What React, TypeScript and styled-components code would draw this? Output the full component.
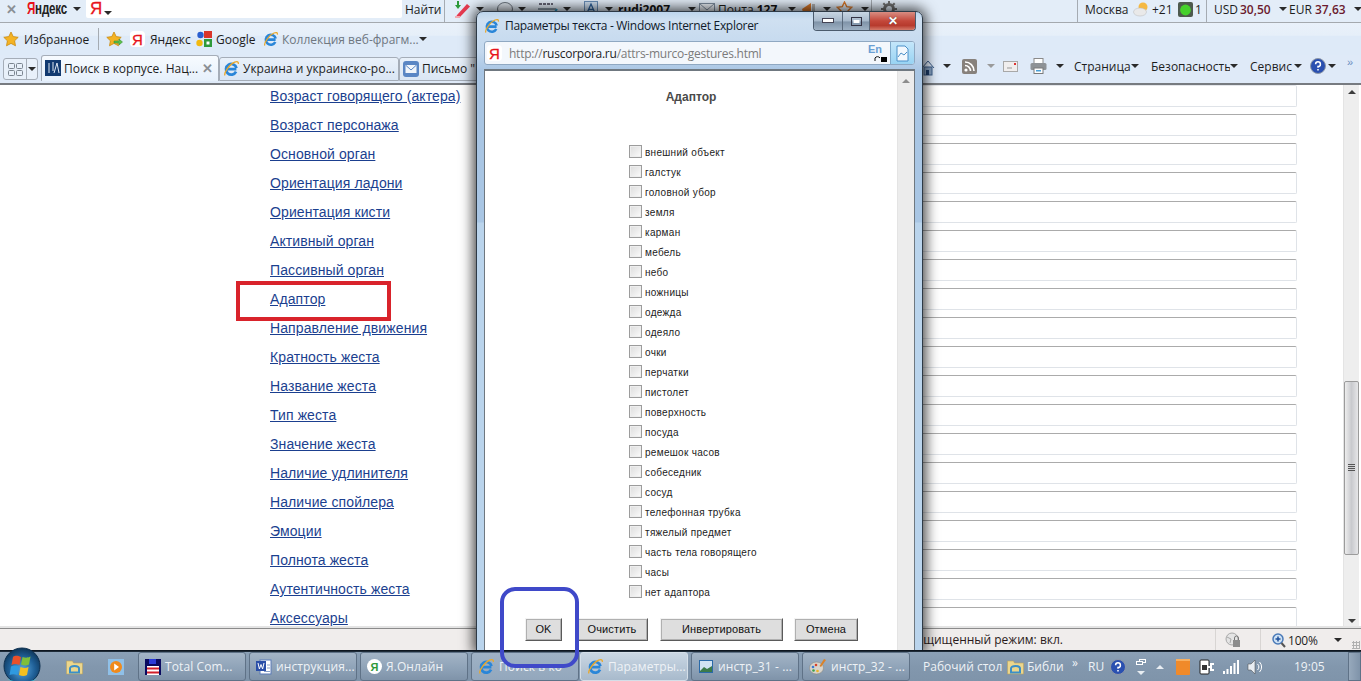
import React from 'react';
import styled, { createGlobalStyle } from 'styled-components';

const Global = createGlobalStyle`
  html, body { margin: 0; padding: 0; width: 1361px; height: 681px; overflow: hidden; background: #fff; }
  #root { width: 1361px; height: 681px; }
  * { box-sizing: border-box; }
`;
const UI = `"Open Sans", "Liberation Sans", sans-serif`;
const AR = `"Liberation Sans", Arial, sans-serif`;

const Screen = styled.div`position: relative; width: 1361px; height: 681px; display: flex; flex-direction: column; overflow: hidden; font-family: ${UI}; font-size: 12px; color: #1d1d1d;`;
const TopBar = styled.div`flex: 0 0 23px; display: flex; align-items: flex-start; background: #e3edf8; border-bottom: 1px solid #a4a9ae; height: 23px;`;
const FavBar = styled.div`flex: 0 0 32px; display: flex; align-items: center; background: linear-gradient(#e9f1fa 0, #e6eff9 38%, #deeaf8 42%, #deeaf8 100%);`;
const TabBar = styled.div`flex: 0 0 30px; display: flex; align-items: flex-start; background: #dfeaf8; border-bottom: 2px solid #777b80; height: 30px;`;
const Cell = styled.div<{ $w: number; $pl?: number; $h?: number; $center?: boolean }>`
  flex: 0 0 ${p => p.$w}px; width: ${p => p.$w}px; height: ${p => p.$h ?? 18}px; padding-left: ${p => p.$pl ?? 0}px;
  display: flex; align-items: center; white-space: nowrap; overflow: hidden;
  justify-content: ${p => (p.$center ? 'center' : 'flex-start')};
`;
const Sep = styled(Cell)`border-left: 1px solid #a5abb2; height: 22px;`;
const Caret = styled.span<{ $c?: string }>`
  display: inline-block; width: 0; height: 0; border-left: 4px solid transparent; border-right: 4px solid transparent; border-top: 4px solid ${p => p.$c ?? '#2a2a2a'};
`;
const Close = styled.span`font: bold 13px ${AR}; color: #8a8f94;`;
const Logo = styled.span`font: bold 17px/18px ${AR}; display: inline-block; transform: scaleX(.68); transform-origin: left center; letter-spacing: -.3px; color: #222;`;
const Red = styled.span`color: #e8121a;`;
const Search = styled.div`flex: 0 0 316px; height: 18px; background: #fff; display: flex; align-items: center; padding-left: 4px; gap: 2px; border-radius: 0 0 2px 2px;`;
const YaBig = styled.span`font: 17px/18px ${AR}; -webkit-text-stroke: .3px #e8121a; color: #e8121a;`;
const SearchCaret = styled(Caret)`margin-top: 8px;`;
const Bold = styled.b`color: #6b1a2e; font-weight: 600;`;
const Strong = styled.b`font-weight: 700; color: #111;`;
const Gray = styled.span`color: #6f7780;`;

const YaBadge = styled.span`display: inline-flex; width: 15px; height: 16px; background: #fff; border-radius: 4px; justify-content: center; align-items: center; font: 15px ${AR}; -webkit-text-stroke: .3px #e8121a; color: #e8121a;`;

const Tab = styled.div<{ $w: number; $active?: boolean }>`
  flex: 0 0 ${p => p.$w}px; width: ${p => p.$w}px; height: ${p => (p.$active ? 26 : 24)}px; margin-top: ${p => (p.$active ? 0 : 2)}px;
  border: 1px solid #a5adb8; border-bottom: ${p => (p.$active ? '0' : '1px solid #a5adb8')}; border-radius: 3px 3px 0 0;
  background: ${p => (p.$active ? 'linear-gradient(#f7fbff,#e6f0fb)' : 'linear-gradient(#e9f1fa,#dae6f4)')};
  display: flex; align-items: center; gap: 3px; padding-left: 3px; padding-bottom: 1px; white-space: nowrap; position: relative; z-index: ${p => (p.$active ? 1 : 0)};
`;
const TabText = styled.span`flex: none;`;
const TabX = styled.span`font: bold 13px ${AR}; color: #8a8f94; margin-left: auto; margin-right: 5px;`;
const GroupBtn = styled.div`flex: 0 0 35px; height: 22px; margin: 3px 3px 0 3px; border: 1px solid #a5adb8; border-radius: 3px; display: flex; align-items: center; background: #e8f0fa;`;
const GroupIcon = styled.div`flex: 0 0 23px; height: 100%; border-right: 1px solid #a5adb8; display: flex; align-items: center; justify-content: center;`;
const GroupCaret = styled.div`flex: 1; display: flex; justify-content: center;`;
const ChevronMore = styled.span`color: #6a8cc0; font: 11px ${AR}; margin-top: -8px;`;

const Page = styled.div`flex: 1; display: flex; background: #fff; overflow: hidden; min-height: 0;`;
const Links = styled.div`flex: 0 0 auto; width: 620px; padding-left: 270px; margin-top: -3px; display: flex; flex-direction: column;`;
const PageLink = styled.a`flex: 0 0 29px; font: 14px/29px ${AR}; letter-spacing: .1px; color: #1b3f8f; text-decoration: underline; white-space: nowrap;`;
const Fields = styled.div`flex: 0 0 auto; width: 397px; margin-left: 280px; display: flex; flex-direction: column; gap: 7px;`;
const Field = styled.div`flex: 0 0 22px; border: 1px solid #dfe3e8; border-top-color: #ababab; border-left-color: #d0d0d0; border-radius: 2px; background: #fff; &:first-child { border-top-color: #e4e6ea; }`;
const Scroll = styled.div`flex: 0 0 16px; margin-left: 46px; background: #eeeeee; border-left: 1px solid #e4e4e4; display: flex; flex-direction: column; align-items: center;`;
const ArrowBox = styled.div`flex: 0 0 14px; display: flex; align-items: center; justify-content: center;`;
const ArrowUp = styled.span<{ $c?: string }>`width: 0; height: 0; border-left: 4px solid transparent; border-right: 4px solid transparent; border-bottom: 4px solid ${p => p.$c ?? '#3c3c3c'};`;
const ArrowDown = styled(ArrowUp)`border-bottom: 0; border-top: 4px solid #3c3c3c;`;
const Thumb = styled.div`flex: 0 0 174px; width: 15px; margin-top: 282px; margin-bottom: auto; border: 1px solid #9b9b9b; border-radius: 2px; background: linear-gradient(90deg,#ededed,#c9cace 50%,#e6e6e8); display: flex; align-items: center; justify-content: center;`;
const Grip = styled.div`width: 7px; height: 8px; background: repeating-linear-gradient(#555 0 1px, transparent 1px 2px);`;

const StatusBar = styled.div`flex: 0 0 23px; display: flex; align-items: center; background: #f0edec; border-top: 1px solid #8b8b8b; box-shadow: 0 -2px 0 #e4e4e4; position: relative;`;
const StatusText = styled.div`flex: 0 0 1063px; text-align: right; white-space: nowrap; font-size: 12px; color: #2a1a1a; margin-top: -1px;`;
const StatusSep = styled(Cell)`border-left: 1px solid #d8d5d3; height: 22px;`;
const ZoomValue = styled.span`flex: 0 0 48px; padding-left: 2px; letter-spacing: -.2px;`;
const ResizeGrip = styled.div`width: 8px; height: 8px; margin-top: 10px; background: radial-gradient(circle, #b0b0b0 1px, transparent 1.2px) 0 0/3px 3px;`;

const Taskbar = styled.div`flex: 0 0 30px; position: relative; z-index: 2; display: flex; align-items: center; background: linear-gradient(#8ba0b6,#8297ad 50%,#7f94aa); border-top: 1px solid #1e2b38; color: #eef2f6; font-size: 12px; box-shadow: 0 -1px 0 #0e1620;`;
const TaskBtn = styled.div<{ $w: number; $gap?: number; $active?: boolean; $pressed?: boolean }>`
  flex: 0 0 ${p => p.$w}px; width: ${p => p.$w}px; height: 29px; margin-right: ${p => p.$gap ?? 3}px;
  border: 1px solid ${p => (p.$active ? '#d4dee8' : '#5f7287')}; border-radius: 3px;
  background: ${p => (p.$active ? 'linear-gradient(#c9d6e3,#a8bacc)' : p.$pressed ? 'linear-gradient(#9fb2c6,#93a7bc)' : 'linear-gradient(#a3b4c6,#8fa3b8 55%,#7f93a9)')};
  display: flex; align-items: center; gap: 4px; padding-left: 6px; white-space: nowrap; overflow: hidden; letter-spacing: .1px;
`;
const ShowDesktop = styled.div`flex: 0 0 13px; height: 29px; margin-left: auto; border: 1px solid #5f7287; background: linear-gradient(90deg,#97a9bc,#7f93a9);`;
const TrayText = styled.span`color: #eef2f6;`;
const TrayStack = styled.div`display: flex; flex-direction: column; align-items: center; gap: 6px; width: 10px; margin-left: 1px;`;
const Chevrons = styled.span`margin-top: -8px; font-size: 12px;`;
const Time = styled.span`color: #eef2f6; font-size: 12px;`;
const Orb = styled.div`position: absolute; left: 3px; top: -5px; z-index: 3;`;

const Popup = styled.div`
  position: absolute; left: 476px; top: 11px; width: 447px; height: 640px; z-index: 1;
  border: 1px solid #2e3a46; border-radius: 7px 7px 0 0; box-shadow: 0 0 13px 3px rgba(0,0,0,.72);
  background: linear-gradient(#bdd5ec 0, #cfe0f1 8px, #c3d8ee 40px, #a9c6e4 59px, #a9c6e4 210px, #bad4ec 211px, #bad4ec 100%);
  display: flex; flex-direction: column; padding: 0 7px;
`;
const TitleRow = styled.div`flex: 0 0 29px; display: flex; align-items: flex-start; position: relative;`;
const TitleLeft = styled.div`display: flex; align-items: center; gap: 5px; padding: 5px 0 0 0; font-size: 12px; letter-spacing: -.3px; color: #101a2a; white-space: nowrap;`;
const WinCtrls = styled.div`position: absolute; right: -1px; top: 0; width: 103px; height: 19px; display: flex; border: 1px solid #4b5b6d; border-top: 0; border-radius: 0 0 4px 4px; overflow: hidden;`;
const WinBtn = styled.div<{ $w: number; $close?: boolean }>`
  flex: 0 0 ${p => p.$w}px; display: flex; align-items: center; justify-content: center; border-right: 1px solid #5a6a7c;
  background: ${p => (p.$close ? 'linear-gradient(#d98d82,#c3473a 50%,#b73b2e 75%,#d47a6a)' : 'linear-gradient(#c8d6e4,#a7b9cb 50%,#7f93a8 55%,#9eb1c4)')};
  &:last-child { border-right: 0; }
`;
const CloseX = styled.span`font: bold 12px ${AR}; color: #fff; text-shadow: 0 0 1px #333;`;
const AddrRow = styled.div`flex: 0 0 24px; display: flex; border: 1px solid #8fa8c2; border-radius: 3px; background: #f3f7fc; align-items: center; overflow: hidden;`;
const Url = styled.div`flex: 1; padding-left: 6px; color: #7b7b7b; font-size: 12px; letter-spacing: -.25px; white-space: nowrap;`;
const UrlHost = styled.span`color: #1e1e1e;`;
const AddrBtn = styled.div`flex: 0 0 24px; height: 100%; background: linear-gradient(#c4e6fa,#98d3f3); border-left: 1px solid #7fa9c9; display: flex; align-items: center; justify-content: center;`;
const EnIcon = styled.div`position: relative; width: 19px; height: 18px; margin-right: 3px; font: bold 11px/11px ${AR}; color: #6a9fd4;`;
const EnCursor = styled.svg`position: absolute; right: 0; bottom: 0;`;
const Body = styled.div`flex: 1; margin-top: 4px; border: 1px solid #6f7880; border-top-width: 2px; border-bottom: 0; background: #fff; display: flex; min-height: 0;`;
const Content = styled.div`flex: 1; padding-top: 19px; display: flex; flex-direction: column;`;
const Heading = styled.div`text-align: center; font: bold 12px/14px ${AR}; color: #4a4a4a;`;
const List = styled.div`margin: 39px 0 0 144px; display: flex; flex-direction: column;`;
const Row = styled.label`flex: 0 0 20px; display: flex; align-items: center; gap: 3px; font: 10px/20px ${AR}; letter-spacing: .3px; color: #222;`;
const Check = styled.input`appearance: none; margin: 0 0 3px 0; width: 13px; height: 13px; border: 1px solid #9c9c9c; background: linear-gradient(135deg,#dcdcdc,#fbfbfb); box-shadow: inset 0 0 0 1px #eee;`;
const Buttons = styled.div`margin-top: 15px; padding-left: 40px; display: flex;`;
const Btn = styled.div<{ $w: number; $ml?: number }>`
  flex: 0 0 ${p => p.$w}px; height: 23px; margin-left: ${p => p.$ml ?? 0}px; background: #dedede; font: 11px/20px ${AR}; letter-spacing: .12px; color: #111; text-align: center;
  border: 1px solid; border-color: #f3f3f3 #5a5a5a #5a5a5a #f3f3f3; box-shadow: 0 0 0 1px #b0b0b0 inset;
`;
const InnerScroll = styled.div`flex: 0 0 17px; background: #ececec; border-left: 1px solid #e4e4e4; display: flex; justify-content: center; padding-top: 8px;`;

const RedBox = styled.div`position: absolute; left: 236px; top: 281px; width: 155px; height: 40px; border: 4px solid #d9232b; z-index: 1;`;
const BlueBox = styled.div`position: absolute; left: 500px; top: 587px; width: 79px; height: 81px; border: 4px solid #3f49c9; border-radius: 15px; z-index: 4;`;

/* ---------- icons ---------- */
const Ie = ({ s = 16 }: { s?: number }) => (
  <svg width={s} height={s} viewBox="0 0 16 16" style={{ flex: 'none' }}>
    <path d="M3.600 8.600h9M12.300 11a5 5 0 1 1 .4-3.400" fill="none" stroke="#2a86d8" strokeWidth="2.600" />
    <path d="M2 14.500C.3 12.600 6 4 11 2c2.500-1 3.600-.4 3.400 1.600" fill="none" stroke="#e8a82c" strokeWidth="1.300" />
  </svg>
);
const Star = ({ c = '#f4b324', arrow }: { c?: string; arrow?: boolean }) => (
  <svg width="17" height="16" viewBox="0 0 17 16" style={{ flex: 'none' }}>
    <path d="M8 1l2.200 4.600 5 .7-3.600 3.500.9 5L8 12.400 3.500 14.800l.9-5L.8 6.300l5-.7z" fill={c} stroke="#c98a12" strokeWidth=".8" />
    {arrow && <path d="M8 10h5V8l3.500 3-3.500 3v-2H8z" fill="#5cc04a" stroke="#2c8a2a" strokeWidth=".5" />}
  </svg>
);
const GoogleIco = () => (
  <svg width="16" height="16" viewBox="0 0 16 16" style={{ flex: 'none' }}>
    <rect x="8" y="0" width="8" height="7" fill="#d9352a" />
    <circle cx="4.500" cy="4" r="3.200" fill="#2a5fd0" />
    <circle cx="3.500" cy="12" r="3.200" fill="#f2b90f" />
    <rect x="8" y="8" width="8" height="8" fill="#2f9a3a" />
    <rect x="10.500" y="10.500" width="3" height="3" fill="#fff" />
  </svg>
);
const Pencil = () => (
  <svg width="18" height="17" viewBox="0 0 18 17"><path d="M4 14L14 3l3 2.500L7 16H3z" fill="#e63a50" /><path d="M2 16h5" stroke="#f2a8b0" strokeWidth="2" /><path d="M4 0h2v4h2L5 8 2 4h2z" fill="#2c9a3a" /></svg>
);
const Ring = () => <svg width="18" height="16" viewBox="0 0 18 16"><ellipse cx="9" cy="8" rx="7.500" ry="6.500" fill="#dfe6ee" stroke="#6d7680" /></svg>;
const Envelope = () => <svg width="16" height="13" viewBox="0 0 16 13"><rect x=".5" y=".5" width="15" height="12" fill="#eef3f9" stroke="#7f8ea0" /><path d="M.5.5L8 7l7.500-6.500" fill="none" stroke="#7f8ea0" /></svg>;
const Weather = () => (
  <svg width="17" height="16" viewBox="0 0 17 16"><circle cx="10" cy="6" r="4.500" fill="#f5b942" /><ellipse cx="7" cy="11" rx="6.500" ry="4" fill="#e9e9e9" stroke="#b8b8b8" strokeWidth=".5" /></svg>
);
const GreenLight = () => <svg width="15" height="15" viewBox="0 0 15 15"><rect width="15" height="15" rx="2" fill="#4e5a4e" /><circle cx="7.500" cy="8" r="5.400" fill="#45d12c" /></svg>;
const Rss = () => <svg width="15" height="15" viewBox="0 0 15 15"><rect width="15" height="15" rx="2" fill="#87817c" /><circle cx="4" cy="11" r="1.600" fill="#fff" /><path d="M3 6.500a5.500 5.500 0 0 1 5.500 5.500M3 3a9 9 0 0 1 9 9" fill="none" stroke="#fff" strokeWidth="1.600" /></svg>;
const MailIco = () => <svg width="15" height="11" viewBox="0 0 15 11"><rect x=".5" y=".5" width="14" height="10" fill="#f0eeee" stroke="#a8a8a8" /><path d="M4 7h5" stroke="#999" /><rect x="11" y="2" width="2" height="2" fill="#d33" /></svg>;
const Printer = () => <svg width="17" height="16" viewBox="0 0 17 16"><rect x="4" y="0.500" width="9" height="5" fill="#fff" stroke="#8a8a8a" /><rect x=".5" y="5" width="16" height="7" rx="1.500" fill="#8e9296" /><rect x="4" y="10" width="9" height="5.500" fill="#fff" stroke="#7a7a7a" /><rect x="6" y="12" width="5" height="1.500" fill="#4aa0d8" /></svg>;
const Help = () => <svg width="16" height="16" viewBox="0 0 16 16"><circle cx="8" cy="8" r="7.500" fill="#2a50b0" stroke="#8e98a8" /><path d="M5.600 6.200A2.400 2.400 0 1 1 8 8.600v1.200M8 11v1.400" fill="none" stroke="#fff" strokeWidth="1.500" /></svg>;
const House = () => <svg width="14" height="16" viewBox="0 0 14 16"><path d="M1 8l6-7 6 7" fill="none" stroke="#3d5f8c" /><rect x="3" y="7" width="8" height="8" fill="#8aa5c4" stroke="#3d5f8c" /><rect x="5" y="10" width="3" height="5" fill="#1e3f6c" /></svg>;
const Corpus = () => <svg width="16" height="16" viewBox="0 0 16 16" style={{ flex: 'none' }}><rect width="16" height="16" fill="#123a70" /><path d="M4 3v10M8 2v9M12 3L9 13M12 3l2 10" stroke="#dfe8f3" strokeWidth="1" fill="none" /></svg>;
const MailTab = () => <svg width="16" height="16" viewBox="0 0 16 16" style={{ flex: 'none' }}><rect width="16" height="16" rx="3" fill="#5a86c4" /><rect x="2.500" y="4" width="11" height="8" fill="#f1f5fa" /><path d="M2.500 4L8 9l5.500-5" fill="none" stroke="#5a86c4" /></svg>;
const Group = () => <svg width="15" height="13" viewBox="0 0 15 13"><rect x=".5" y=".5" width="6" height="5" rx="1" fill="none" stroke="#7b8590" /><rect x="8.500" y=".5" width="6" height="5" rx="1" fill="none" stroke="#7b8590" /><rect x=".5" y="7.500" width="6" height="5" rx="1" fill="none" stroke="#7b8590" /><rect x="8.500" y="7.500" width="6" height="5" rx="1" fill="none" stroke="#7b8590" /></svg>;
const Folder = () => <svg width="17" height="16" viewBox="0 0 17 16" style={{ flex: 'none' }}><path d="M0.500 2h6l1 2h9v11H.5z" fill="#ecd68c" stroke="#b8a360" strokeWidth=".6" /><path d="M4 14V9.500a4.500 2.500 0 0 1 9 0V14" fill="none" stroke="#3b8fc8" strokeWidth="2" /><rect x="3" y="12.500" width="11" height="2" fill="#3b8fc8" /></svg>;
const Player = () => <svg width="16" height="16" viewBox="0 0 16 16"><rect width="16" height="16" fill="#8fc0e8" /><circle cx="8" cy="8" r="6" fill="#f08a1c" /><path d="M6.200 4.600L11 8l-4.800 3.400z" fill="#fff" /></svg>;
const Floppy = () => <svg width="16" height="16" viewBox="0 0 16 16" style={{ flex: 'none' }}><rect width="16" height="16" fill="#0a0a60" /><rect x="4" y="0" width="7" height="5" fill="#2a3ad8" /><rect x="2" y="7" width="12" height="9" fill="#fff" /><rect x="2" y="8.500" width="12" height="2" fill="#d21f2a" /><rect x="2" y="12.500" width="12" height="2" fill="#d21f2a" /></svg>;
const Word = () => <svg width="16" height="16" viewBox="0 0 16 16" style={{ flex: 'none' }}><rect x="4" y="1" width="11" height="14" fill="#fff" stroke="#5a7bb8" /><rect x="0" y="2" width="10" height="10" fill="#2a4fa8" /><path d="M2 4l1.400 6L5 5.500 6.600 10 8 4" fill="none" stroke="#fff" strokeWidth="1" /><path d="M11 6h3M11 9h3M8 12.500h6" stroke="#8aa0c8" /></svg>;
const YaOnline = styled.span`flex: none; width: 15px; height: 15px; border-radius: 50%; background: #fff; display: flex; align-items: center; justify-content: center; font: bold 11px ${AR}; color: #2f9a3a;`;
const Pic = () => <svg width="16" height="15" viewBox="0 0 16 15" style={{ flex: 'none' }}><rect x="1.500" y="1.500" width="13" height="12" fill="#cfe2f2" stroke="#2a6aa8" /><path d="M2 12l4-4 3 2 5-3v6H2z" fill="#3b7a4a" /></svg>;
const Palette = () => <svg width="18" height="16" viewBox="0 0 18 16" style={{ flex: 'none' }}><ellipse cx="7.500" cy="9" rx="7" ry="6" fill="#d8d4cc" stroke="#8a8578" strokeWidth=".5" /><circle cx="4" cy="8" r="1.300" fill="#3b7ad0" /><circle cx="7" cy="6" r="1.300" fill="#d8432a" /><circle cx="4.500" cy="11.500" r="1.300" fill="#3ba04a" /><circle cx="8.500" cy="12" r="1.300" fill="#eab22a" /><path d="M15 0l2 1-5 7-1.500-1z" fill="#d9822a" /></svg>;
const WinOrb = () => (
  <svg width="38" height="38" viewBox="0 0 38 38">
    <defs>
      <radialGradient id="orbg" cx="50%" cy="60%" r="60%"><stop offset="0" stopColor="#5aa8e0" /><stop offset=".6" stopColor="#1f5f96" /><stop offset="1" stopColor="#0e3558" /></radialGradient>
    </defs>
    <circle cx="19" cy="19" r="18" fill="url(#orbg)" stroke="#0e3050" />
    <path d="M4 31a18 12 0 0 0 30 0 18 9 0 0 1-30 0z" fill="#3fd4f0" opacity=".9" />
    <path d="M10 10c3-2 5-1 8 0l-1.500 8c-3-1-5-1.500-8 0z" fill="#e8502a" />
    <path d="M19.500 10c3 1 5 1 8-.5l-1.500 8c-3 1.500-5 1-8 0z" fill="#7fbf3a" />
    <path d="M8 19.500c3-1.500 5-1 8 0L14.500 28c-3-1-5-1-8 0z" fill="#2f9ae0" />
    <path d="M17.500 20c3 1 5 1.500 8 0L24 28c-3 1.500-5 1-8 0z" fill="#f4c020" />
  </svg>
);
const OrangeBook = () => <svg width="14" height="16" viewBox="0 0 14 16"><rect width="14" height="16" rx="1" fill="#f08a2a" /><rect x="0" y="0" width="14" height="2" fill="#f8b060" /></svg>;
const Plug = () => <svg width="16" height="16" viewBox="0 0 16 16"><rect x="1" y="1" width="9" height="14" rx="1" fill="#fff" stroke="#222" /><path d="M9 8h3V5h3M12 8v3h3" stroke="#fff" strokeWidth="2" fill="none" /><rect x="3" y="6" width="5" height="5" fill="#333" /></svg>;
const Signal = () => <svg width="16" height="14" viewBox="0 0 16 14"><rect x="0" y="11" width="2" height="3" fill="#fff" /><rect x="3.500" y="9" width="2" height="5" fill="#fff" /><rect x="7" y="6" width="2" height="8" fill="#fff" /><rect x="10.500" y="3" width="2" height="11" fill="#fff" /><rect x="14" y="0" width="2" height="14" fill="#fff" /></svg>;
const Speaker = () => <svg width="17" height="16" viewBox="0 0 17 16"><path d="M1 5h3l4-4v14l-4-4H1z" fill="#e8edf2" stroke="#444" strokeWidth=".5" /><path d="M10.500 5a4 4 0 0 1 0 6M12.500 3a7 7 0 0 1 0 10" fill="none" stroke="#fff" /></svg>;
const TrayWin = () => <svg width="10" height="6" viewBox="0 0 10 6"><rect x="3.500" y=".5" width="6" height="3" fill="none" stroke="#fff" /><rect x=".5" y="2.500" width="6" height="3" fill="#8297ad" stroke="#fff" /></svg>;
const GlobeLock = () => <svg width="16" height="16" viewBox="0 0 16 16"><circle cx="7" cy="7" r="6" fill="#e4e4e4" stroke="#a8a8a8" /><path d="M2 5l4 2-1 4" fill="none" stroke="#a8a8a8" /><rect x="8" y="8" width="7" height="7" fill="#8c8c8c" /><path d="M9.500 8V6a2 2 0 0 1 4 0v2" fill="none" stroke="#777" /></svg>;
const ZoomIco = () => <svg width="14" height="15" viewBox="0 0 14 15"><circle cx="6" cy="6" r="5" fill="#cfe2f4" stroke="#4a7ab8" strokeWidth="1.500" /><path d="M6 3.500v5M3.500 6h5" stroke="#1e4f9a" strokeWidth="1.500" /><path d="M9.500 10l3.500 4" stroke="#555" strokeWidth="2" /></svg>;
const Orange = () => <svg width="16" height="16" viewBox="0 0 16 16"><path d="M1 8l9-6v13H3z" fill="#d9782a" /><rect x="11" y="3" width="3" height="12" fill="#b0b0b0" /></svg>;
const StarOut = () => <svg width="18" height="16" viewBox="0 0 17 16"><path d="M8 1l2.200 4.600 5 .7-3.600 3.500.9 5L8 12.400 3.500 14.800l.9-5L.8 6.300l5-.7z" fill="none" stroke="#d9782a" strokeWidth="1.400" /></svg>;
const Gear = () => <svg width="16" height="16" viewBox="0 0 16 16"><circle cx="8" cy="8" r="4.500" fill="none" stroke="#707070" strokeWidth="3" /><path d="M8 0v3M8 13v3M0 8h3M13 8h3M2.300 2.300l2 2M11.700 11.700l2 2M2.300 13.700l2-2M11.700 4.300l2-2" stroke="#707070" strokeWidth="2" /></svg>;
const Abv = () => <svg width="24" height="16" viewBox="0 0 24 16"><rect x="1" y="7" width="18" height="2" fill="#8a9aa8" /><path d="M16 14l4-6" stroke="#2a9ac8" strokeWidth="2" /><path d="M2 3h14" stroke="#667" strokeWidth="2" strokeDasharray="3 1" /></svg>;
const BlueA = () => <svg width="14" height="16" viewBox="0 0 14 16"><rect x=".5" y=".5" width="13" height="15" fill="#cfe0f2" stroke="#6a8fb8" /><path d="M3.500 11L7 3l3.500 8M5 8.500h4" stroke="#2a5f9a" strokeWidth="1.300" fill="none" /></svg>;
const PageIco = () => <svg width="17" height="17" viewBox="0 0 17 17"><path d="M3 1h8l3 3v12H3z" fill="#f2f8fd" stroke="#4a90c8" /><path d="M4 12l3-4 3 2 3-3" fill="none" stroke="#4a90c8" /></svg>;

const links = ['Возраст говорящего (актера)', 'Возраст персонажа', 'Основной орган', 'Ориентация ладони', 'Ориентация кисти', 'Активный орган', 'Пассивный орган', 'Адаптор', 'Направление движения', 'Кратность жеста', 'Название жеста', 'Тип жеста', 'Значение жеста', 'Наличие удлинителя', 'Наличие спойлера', 'Эмоции', 'Полнота жеста', 'Аутентичность жеста', 'Аксессуары'];
const adaptors = ['внешний объект', 'галстук', 'головной убор', 'земля', 'карман', 'мебель', 'небо', 'ножницы', 'одежда', 'одеяло', 'очки', 'перчатки', 'пистолет', 'поверхность', 'посуда', 'ремешок часов', 'собеседник', 'сосуд', 'телефонная трубка', 'тяжелый предмет', 'часть тела говорящего', 'часы', 'нет адаптора'];

export default function App() {
  return (
    <Screen>
      <Global />
      <TopBar>
        <Cell $w={27} $pl={6}><Close>✕</Close></Cell>
        <Cell $w={46}><Logo><Red>Я</Red>ндекс</Logo></Cell>
        <Cell $w={13}><Caret /></Cell>
        <Search><YaBig>Я</YaBig><SearchCaret /></Search>
        <Cell $w={42} $pl={3}>Найти</Cell>
        <Sep $w={9} />
        <Cell $w={19}><Pencil /></Cell>
        <Cell $w={18} $pl={4}><Caret /></Cell>
        <Cell $w={28} $pl={6}><Ring /></Cell>
        <Cell $w={15}><Caret /></Cell>
        <Cell $w={30} $pl={4}><Abv /></Cell>
        <Cell $w={15}><Caret /></Cell>
        <Cell $w={27} $pl={6}><BlueA /></Cell>
        <Cell $w={13}><Caret /></Cell>
        <Cell $w={70}><Strong>rudi2007</Strong></Cell>
        <Cell $w={11}><Caret /></Cell>
        <Cell $w={19}><Envelope /></Cell>
        <Cell $w={70}>Почта&nbsp;<Strong>127</Strong></Cell>
        <Cell $w={13}><Caret /></Cell>
        <Cell $w={22}><Orange /></Cell>
        <Cell $w={13}><Caret /></Cell>
        <Cell $w={25}><StarOut /></Cell>
        <Cell $w={10}><Caret /></Cell>
        <Sep $w={10} />
        <Cell $w={196}><Gear /></Cell>
        <Sep $w={8} />
        <Cell $w={48}>Москва</Cell>
        <Cell $w={19}><Weather /></Cell>
        <Cell $w={26}>+21</Cell>
        <Cell $w={17}><GreenLight /></Cell>
        <Cell $w={11}>1</Cell>
        <Sep $w={8} />
        <Cell $w={26}>USD</Cell>
        <Cell $w={39}><Bold>30,50</Bold></Cell>
        <Cell $w={10}><Caret /></Cell>
        <Cell $w={26}>EUR</Cell>
        <Cell $w={39}><Bold>37,63</Bold></Cell>
        <Cell $w={8}><Caret /></Cell>
      </TopBar>

      <FavBar>
        <Cell $w={24} $pl={3}><Star /></Cell>
        <Cell $w={74}>Избранное</Cell>
        <Sep $w={8} />
        <Cell $w={24}><Star arrow /></Cell>
        <Cell $w={20}><YaBadge>Я</YaBadge></Cell>
        <Cell $w={46}>Яндекс</Cell>
        <Cell $w={20}><GoogleIco /></Cell>
        <Cell $w={47}>Google</Cell>
        <Cell $w={19}><Ie /></Cell>
        <Cell $w={137}><Gray>Коллекция веб-фрагм...</Gray></Cell>
        <Cell $w={12}><Caret /></Cell>
      </FavBar>

      <TabBar>
        <GroupBtn><GroupIcon><Group /></GroupIcon><GroupCaret><Caret /></GroupCaret></GroupBtn>
        <Tab $w={178} $active><Corpus /><TabText>Поиск в корпусе. Нац...</TabText><TabX>✕</TabX></Tab>
        <Tab $w={180}><Ie s={17} /><TabText>Украина и украинско-ро...</TabText></Tab>
        <Tab $w={100}><MailTab /><TabText>Письмо "</TabText></Tab>
        <Cell $w={422} />
        <Cell $w={22} $h={26}><House /></Cell>
        <Cell $w={19} $h={22}><Caret /></Cell>
        <Cell $w={25} $h={22}><Rss /></Cell>
        <Cell $w={16} $h={22}><Caret $c="#9a9a9a" /></Cell>
        <Cell $w={27} $h={22}><MailIco /></Cell>
        <Cell $w={26} $h={22}><Printer /></Cell>
        <Cell $w={18} $h={22}><Caret /></Cell>
        <Cell $w={57} $h={22}>Страница</Cell>
        <Cell $w={20} $h={22}><Caret /></Cell>
        <Cell $w={79} $h={22}>Безопасность</Cell>
        <Cell $w={20} $h={22}><Caret /></Cell>
        <Cell $w={44} $h={22}>Сервис</Cell>
        <Cell $w={16} $h={22}><Caret /></Cell>
        <Cell $w={18} $h={22}><Help /></Cell>
        <Cell $w={19} $h={22}><Caret /></Cell>
        <Cell $w={8} $h={22}><ChevronMore>»</ChevronMore></Cell>
      </TabBar>

      <Page>
        <Links>
          {links.map(l => <PageLink key={l} href="#">{l}</PageLink>)}
        </Links>
        <Fields>
          {Array.from({ length: 19 }, (_, i) => <Field key={i} />)}
        </Fields>
        <Scroll>
          <ArrowBox><ArrowUp /></ArrowBox>
          <Thumb><Grip /></Thumb>
          <ArrowBox><ArrowDown /></ArrowBox>
        </Scroll>
      </Page>

      <StatusBar>
        <StatusText>Интернет | Защищенный режим: вкл.</StatusText>
        <Cell $w={152} />
        <StatusSep $w={45} $pl={9}><GlobeLock /></StatusSep>
        <StatusSep $w={92} $pl={11}><ZoomIco /><ZoomValue>100%</ZoomValue><Caret /></StatusSep>
        <ResizeGrip />
      </StatusBar>

      <Taskbar>
        <Orb><WinOrb /></Orb>
        <Cell $w={66} $h={29} />
        <Cell $w={42} $h={29}><Folder /></Cell>
        <Cell $w={30} $h={29}><Player /></Cell>
        <TaskBtn $w={108}><Floppy />Total Com...</TaskBtn>
        <TaskBtn $w={108}><Word />инструкция...</TaskBtn>
        <TaskBtn $w={108}><YaOnline>Я</YaOnline>Я.Онлайн</TaskBtn>
        <TaskBtn $w={108} $gap={1} $pressed><Ie s={17} />Поиск в ко</TaskBtn>
        <TaskBtn $w={108} $active><Ie s={17} />Параметры...</TaskBtn>
        <TaskBtn $w={108}><Pic />инстр_31 - ...</TaskBtn>
        <TaskBtn $w={108} $gap={13}><Palette />инстр_32 - ...</TaskBtn>
        <Cell $w={84} $h={29}>Рабочий стол</Cell>
        <Cell $w={20} $h={29}><Folder /></Cell>
        <Cell $w={45} $h={29}>Библи</Cell>
        <Cell $w={16} $h={29}><Chevrons>»</Chevrons></Cell>
        <Cell $w={22} $h={29}><TrayText>RU</TrayText></Cell>
        <Cell $w={24} $h={29}><Help /></Cell>
        <Cell $w={22} $h={29} $pl={1}><TrayStack><TrayWin /><Caret $c="#e8edf2" /></TrayStack></Cell>
        <Cell $w={20} $h={29}><ArrowUp $c="#e8edf2" /></Cell>
        <Cell $w={23} $h={29}><OrangeBook /></Cell>
        <Cell $w={24} $h={29}><Plug /></Cell>
        <Cell $w={24} $h={29}><Signal /></Cell>
        <Cell $w={47} $h={29}><Speaker /></Cell>
        <Cell $w={36} $h={29}><Time>19:05</Time></Cell>
        <ShowDesktop />
      </Taskbar>

      <RedBox />
      <Popup>
        <TitleRow>
          <TitleLeft><Ie />Параметры текста - Windows Internet Explorer</TitleLeft>
          <WinCtrls>
            <WinBtn $w={29}><svg width="12" height="6"><rect x=".5" y=".5" width="11" height="4" fill="#fff" stroke="#445" /></svg></WinBtn>
            <WinBtn $w={27}><svg width="11" height="9"><rect x=".5" y=".5" width="10" height="8" fill="none" stroke="#334" /><rect x="2.500" y="3" width="6" height="3" fill="#fff" /></svg></WinBtn>
            <WinBtn $w={45} $close><CloseX>✕</CloseX></WinBtn>
          </WinCtrls>
        </TitleRow>
        <AddrRow>
          <Cell $w={18} $pl={2} $h={22}><YaBadge>Я</YaBadge></Cell>
          <Url>http://<UrlHost>ruscorpora.ru</UrlHost>/attrs-murco-gestures.html</Url>
          <EnIcon>En<EnCursor width="13" height="8" viewBox="0 0 13 8"><path d="M1 7V4a3 3 0 0 1 5 0" fill="none" stroke="#111" /><rect x="7" y="3" width="6" height="5" fill="#000" /></EnCursor></EnIcon>
          <AddrBtn><PageIco /></AddrBtn>
        </AddrRow>
        <Body>
          <Content>
            <Heading>Адаптор</Heading>
            <List>
              {adaptors.map(a => <Row key={a}><Check type="checkbox" />{a}</Row>)}
            </List>
            <Buttons>
              <Btn $w={37}>OK</Btn>
              <Btn $w={72} $ml={14}>Очистить</Btn>
              <Btn $w={123} $ml={12}>Инвертировать</Btn>
              <Btn $w={64} $ml={11}>Отмена</Btn>
            </Buttons>
          </Content>
          <InnerScroll><ArrowUp $c="#8c8c8c" /></InnerScroll>
        </Body>
      </Popup>
      <BlueBox />
    </Screen>
  );
}
